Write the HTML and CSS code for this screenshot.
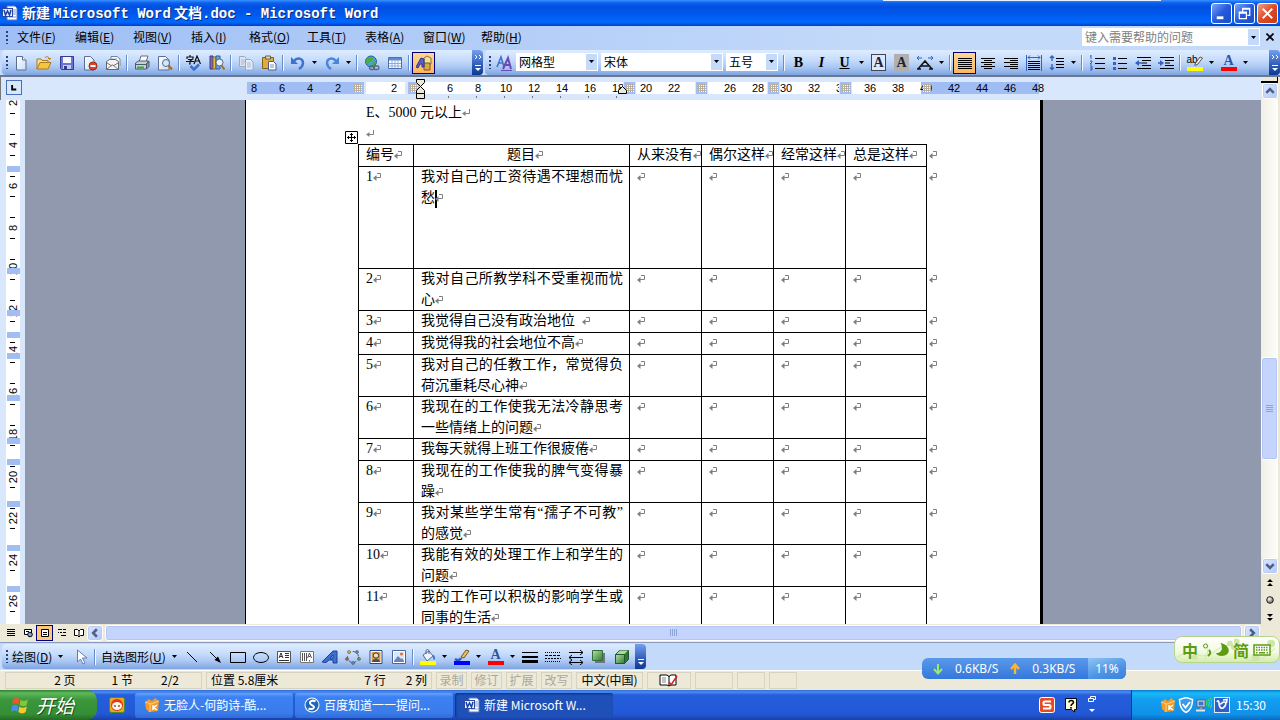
FILE: index.html
```html
<!DOCTYPE html>
<html lang="zh-CN">
<head>
  <meta charset="UTF-8">
  <title>新建 Microsoft Word 文档.doc - Microsoft Word</title>
  <link rel="stylesheet" href="styles.css">
</head>
<body>
  <!-- shared shapes -->
  <svg class="defs" width="0" height="0">
    <defs>
      <linearGradient id="paper" x1="0" y1="0" x2="1" y2="1"><stop offset="0" stop-color="#fff"/><stop offset="1" stop-color="#c9dcf5"/></linearGradient>
      <linearGradient id="green" x1="0" y1="0" x2="1" y2="1"><stop offset="0" stop-color="#b5e0a8"/><stop offset="1" stop-color="#2f7a32"/></linearGradient>
      <radialGradient id="ball" cx=".35" cy=".3" r=".8"><stop offset="0" stop-color="#fff"/><stop offset="1" stop-color="#555"/></radialGradient>
      <pattern id="dots" width="2" height="2" patternUnits="userSpaceOnUse"><rect width="2" height="2" fill="#b9ae9c"/><rect width="1" height="1" fill="#fff"/></pattern>
    </defs>
    <symbol id="down" viewBox="0 0 5 3"><path d="M0 0h5L2.500 3z" fill="#000"/></symbol>
    <symbol id="para" viewBox="0 0 8 8"><path d="M7.500 0v4.500H3" fill="none" stroke="#808080"/><path d="M3.500 2v5L0 4.500z" fill="#808080"/></symbol>
    <symbol id="cell" viewBox="0 0 8 8"><path d="M4 .5h3.500v4H3" fill="none" stroke="#808080"/><path d="M3.500 2v6L0 5z" fill="#808080"/></symbol>
    <symbol id="word" viewBox="0 0 16 16">
      <path d="M5 1h8l2 2v12H5z" fill="#fff" stroke="#5b7cc0"/><path d="M11 5h3M11 7h3M11 9h3M7 12h7" stroke="#7f9bd6"/>
      <rect x=".5" y="3.500" width="10" height="8" fill="#e9f0ff" stroke="#2c4ba0"/><path d="M2 5l1.500 5L5.500 6l2 4L9 5" fill="none" stroke="#1b3fa5" stroke-width="1.500"/>
    </symbol>
    <symbol id="more" viewBox="0 0 8 18"><path d="M1 1l2 2-2 2M5 1l2 2-2 2" fill="none" stroke="#fff"/><path d="M1 11.500h6" stroke="#fff"/><path d="M1 14h6l-3 3z" fill="#fff"/></symbol>
  </svg>

  <header class="titlebar">
    <svg class="ic"><use href="#word"/></svg>
    <h1>新建 <span>Microsoft Word</span> 文档<span>.doc - Microsoft Word</span></h1>
    <button class="win" aria-label="最小化"><svg viewBox="0 0 20 20"><path d="M5 13h7v3H5z" fill="#fff"/></svg></button>
    <button class="win" aria-label="还原"><svg viewBox="0 0 20 20"><path d="M8 8V4.500h7.500V12H13M8 5.500h7.500M4.500 8.500h7.500v7H4.500zM4.500 9.500h7.500" fill="none" stroke="#fff" stroke-width="1.300"/></svg></button>
    <button class="win close" aria-label="关闭"><svg viewBox="0 0 20 20"><path d="M5 5l10 10M15 5L5 15" stroke="#fff" stroke-width="2"/></svg></button>
  </header>

  <nav class="menubar">
    <i class="grip"></i>
    <button>文件(<u>F</u>)</button>
    <button>编辑(<u>E</u>)</button>
    <button>视图(<u>V</u>)</button>
    <button>插入(<u>I</u>)</button>
    <button>格式(<u>O</u>)</button>
    <button>工具(<u>T</u>)</button>
    <button>表格(<u>A</u>)</button>
    <button>窗口(<u>W</u>)</button>
    <button>帮助(<u>H</u>)</button>
    <div class="ask">
      <input type="text" placeholder="键入需要帮助的问题" aria-label="键入需要帮助的问题">
      <button class="drop" aria-label="展开"><svg><use href="#down"/></svg></button>
    </div>
    <button class="shut" aria-label="关闭文档"><svg viewBox="0 0 8 8"><path d="M.5 .5l7 7M7.500 .5l-7 7" stroke="#000" stroke-width="1.600"/></svg></button>
  </nav>

  <div class="toolbars">
    <div class="toolbar standard">
      <i class="grip"></i>
      <button class="tb" aria-label="新建"><svg viewBox="0 0 16 16"><path d="M3.500 1.500h6l3.500 3.500v10H3.500z" fill="url(#paper)" stroke="#5b6f96"/><path d="M9.500 1.500V5H13" fill="#fff" stroke="#5b6f96"/></svg></button>
      <button class="tb" aria-label="打开"><svg viewBox="0 0 16 16"><path d="M1 14V4h4l1 1.500h6V8" fill="#ffe08a" stroke="#a77b1e"/><path d="M1 14L4 7.500h11L12 14z" fill="#f7c544" stroke="#a77b1e"/><path d="M9 2.500c2-1.500 4-.5 4.500 1.500M12 3l1.500 1.500L15 3" fill="none" stroke="#b37a10"/></svg></button>
      <button class="tb" aria-label="保存"><svg viewBox="0 0 16 16"><path d="M1.500 1.500h13v13h-12l-1-1z" fill="#6b74d6" stroke="#343b8e"/><path d="M4 2h8v6H4z" fill="#f4f6ff"/><path d="M4 10h8v4H4z" fill="#c5cbe8"/><path d="M5 11h3v3H5z" fill="#343b8e"/></svg></button>
      <button class="tb" aria-label="权限"><svg viewBox="0 0 16 16"><path d="M2.500 1.500h6L12 5v10H2.500z" fill="url(#paper)" stroke="#5b6f96"/><circle cx="11" cy="11" r="4" fill="#e0432b" stroke="#a4280f"/><path d="M8.500 11h5" stroke="#fff" stroke-width="2"/></svg></button>
      <button class="tb" aria-label="电子邮件"><svg viewBox="0 0 16 16"><path d="M6 7V1.500h6L15 4v7" fill="#fff" stroke="#7282a0"/><path d="M7 4h5M7 6h6" stroke="#9aaac8"/><path d="M1.500 6.500l3-2h6l3 2v8h-12z" fill="#f4f4f4" stroke="#666"/><path d="M1.500 14.500L7 10h1l5.500 4.500M2 8l5 3M13 8l-5 3" fill="none" stroke="#777"/></svg></button>
      <i class="sep"></i>
      <button class="tb" aria-label="打印"><svg viewBox="0 0 16 16"><path d="M5 7l2-6h7l-2 6" fill="#fff" stroke="#5f6d85"/><path d="M1.500 8l3-2h10l-2 3v5h-11z" fill="#c9cfd8" stroke="#4d586b"/><path d="M2 9.500h10" stroke="#4d586b"/><path d="M3 12.500h7" stroke="#2fae3a" stroke-width="2"/><path d="M12.500 9l2.500-2.500v5L12.500 14z" fill="#8e98aa" stroke="#4d586b"/></svg></button>
      <button class="tb" aria-label="打印预览"><svg viewBox="0 0 16 16"><path d="M1.500 1.500h7L12 5v10H1.500z" fill="url(#paper)" stroke="#5b6f96"/><circle cx="9" cy="8" r="3.500" fill="#cfe8ff" stroke="#546a8c"/><path d="M11.500 10.500l3.500 4" stroke="#b5651d" stroke-width="2"/></svg></button>
      <i class="sep"></i>
      <button class="tb" aria-label="拼写和语法"><svg viewBox="0 0 16 16"><path d="M4 0v2M1 4V2h6v2M2 4.500h4L4 6v3H3M0 6.500h8M8 9l3-8 3.500 8M9 6h5" fill="none" stroke="#111" stroke-width="1.200"/><path d="M4.500 11l3.500 3.500 5-5" fill="none" stroke="#3a6fc9" stroke-width="2.500"/></svg></button>
      <button class="tb" aria-label="信息检索"><svg viewBox="0 0 16 16"><path d="M1 1h3v13H1z" fill="#7b66c9" stroke="#443388"/><path d="M4 2h3v12H4z" fill="#e8bb47" stroke="#8d6a1a"/><path d="M7 1h4v13H7z" fill="#6da6d9" stroke="#31608f"/><circle cx="10.500" cy="7.500" r="3.500" fill="#e4f4ff" stroke="#546a8c"/><path d="M12.500 10.500l3 4" stroke="#b5651d" stroke-width="2"/></svg></button>
      <i class="sep"></i>
      <button class="tb" aria-label="复制"><svg viewBox="0 0 16 16"><path d="M1.500 1.500h5l2 2v8h-7z" fill="#dbe4f3" stroke="#9aa8c4"/><path d="M3 5h4M3 7h4M3 9h3" stroke="#aab7d0"/><path d="M7.500 4.500h5l2.500 2.500v8H7.500z" fill="#e6edf8" stroke="#9aa8c4"/><path d="M9 8h4M9 10h4M9 12h4" stroke="#aab7d0"/></svg></button>
      <button class="tb" aria-label="粘贴"><svg viewBox="0 0 16 16"><path d="M1.500 2.500h11v11h-11z" fill="#e0ad3c" stroke="#87611a"/><path d="M4.500 1h5v3h-5z" fill="#ded9c8" stroke="#6b6044"/><path d="M7.500 6.500h5L15 9v6H7.500z" fill="#fff" stroke="#4b5e88"/><path d="M9 10h4M9 12h4" stroke="#7b92c0"/></svg></button>
      <i class="sep"></i>
      <button class="tb" aria-label="撤消"><svg viewBox="0 0 16 16"><path d="M4 6c3-4 9-3 9 2 0 3-1 4-4 6" fill="none" stroke="#3d72d0" stroke-width="2.400"/><path d="M1 2v7h7z" fill="#3d72d0"/></svg></button>
      <button class="arrow" aria-label="撤消列表"><svg><use href="#down"/></svg></button>
      <button class="tb" aria-label="恢复"><svg viewBox="0 0 16 16"><path d="M12 6C9 2 3 3 3 8c0 3 1 4 4 6" fill="none" stroke="#4a85dc" stroke-width="2.400"/><path d="M15 2v7H8z" fill="#4a85dc"/></svg></button>
      <button class="arrow" aria-label="恢复列表"><svg><use href="#down"/></svg></button>
      <i class="sep"></i>
      <button class="tb" aria-label="超链接"><svg viewBox="0 0 16 16"><circle cx="7" cy="6.500" r="5.500" fill="#4f9fd8" stroke="#24618f"/><path d="M3 3c2-2 4 0 6 0 1 2-1 3-3 4s-2 3-3 2-2-4 0-6zM9 7l3-1-1 4-3 1z" fill="#49ad43"/><rect x="5.500" y="11" width="5" height="3.500" rx="1.700" fill="none" stroke="#58677e" stroke-width="1.300"/><rect x="9.500" y="11" width="5.500" height="3.500" rx="1.700" fill="none" stroke="#58677e" stroke-width="1.300"/></svg></button>
      <button class="tb" aria-label="插入表格"><svg viewBox="0 0 16 16"><path d="M1.500 2.500h13v11h-13z" fill="#fff" stroke="#4a6fb5"/><path d="M2 3h12v2.500H2z" fill="#5f8ad6"/><path d="M2 8.500h12M2 11h12M5 5v8M8 5v8M11 5v8" stroke="#92a9d4"/></svg></button>
      <i class="sep"></i>
      <button class="tb on" aria-label="绘图"><svg viewBox="0 0 16 16"><path d="M8 3l3-2 4 2v6l-3 2-4-2z" fill="#f3df9c" stroke="#8b7330"/><path d="M8 8v7h6V8z" fill="#d9a74c" stroke="#7c5b1a"/><path d="M0 12L5 3l3 1v8H6V9H4l-2 4z" fill="#5660c8" stroke="#2d3690"/></svg></button>
      <button class="overflow" aria-label="工具栏选项"><svg><use href="#more"/></svg></button>
    </div>
    <div class="toolbar format">
      <i class="grip"></i>
      <button class="tb" aria-label="格式窗格"><svg viewBox="0 0 16 16"><path d="M1 12L5 2l3 10M2 8h5" fill="none" stroke="#4273cc" stroke-width="1.600"/><path d="M7 14l5-11 3 11M9 10h5" fill="none" stroke="#6b4ab5" stroke-width="2"/><path d="M5 15.500h11" stroke="#6b4ab5"/></svg></button>
      <label class="combo style"><select aria-label="样式"><option>网格型</option></select><i class="drop"><svg><use href="#down"/></svg></i></label>
      <label class="combo font"><select aria-label="字体"><option>宋体</option></select><i class="drop"><svg><use href="#down"/></svg></i></label>
      <label class="combo size"><select aria-label="字号"><option>五号</option></select><i class="drop"><svg><use href="#down"/></svg></i></label>
      <i class="sep"></i>
      <button class="tb letter"><b>B</b></button>
      <button class="tb letter"><b><em>I</em></b></button>
      <button class="tb letter"><b><u>U</u></b></button>
      <button class="arrow" aria-label="下划线样式"><svg><use href="#down"/></svg></button>
      <button class="tb letter"><b class="boxed">A</b></button>
      <button class="tb letter"><b class="shaded">A</b></button>
      <button class="tb" aria-label="字符缩放"><svg viewBox="0 0 16 16"><path d="M1 14L8 6l7 8M4 11h8M0 14h4M12 14h4" fill="none" stroke="#111" stroke-width="1.500"/><path d="M0 3h5M11 3h5M2 1L0 3l2 2M14 1l2 2-2 2" fill="none" stroke="#2f62c4"/></svg></button>
      <button class="arrow" aria-label="缩放列表"><svg><use href="#down"/></svg></button>
      <i class="sep"></i>
      <button class="tb on" aria-label="两端对齐"><svg viewBox="0 0 16 16"><path d="M1 3.500h14M1 5.500h14M1 7.500h14M1 9.500h14M1 11.500h14M1 13.500h14" stroke="#000"/></svg></button>
      <button class="tb" aria-label="居中"><svg viewBox="0 0 16 16"><path d="M1 3.500h14M4 5.500h8M1 7.500h14M4 9.500h8M1 11.500h14M4 13.500h8" stroke="#000"/></svg></button>
      <button class="tb" aria-label="右对齐"><svg viewBox="0 0 16 16"><path d="M1 3.500h14M7 5.500h8M1 7.500h14M7 9.500h8M1 11.500h14M7 13.500h8" stroke="#000"/></svg></button>
      <button class="tb" aria-label="分散对齐"><svg viewBox="0 0 16 16"><path d="M.5 0v16M15.500 0v16M2 2.500h12M4 .5l-2 2 2 2M12 .5l2 2-2 2" fill="none" stroke="#2f62c4"/><path d="M2 6.500h12M2 8.500h12M2 10.500h12M2 12.500h12M2 14.500h12" stroke="#000"/></svg></button>
      <button class="tb" aria-label="行距"><svg viewBox="0 0 16 16"><path d="M3 1v5M1 3l2-2 2 2M3 9v6M1 12.500l2 2 2-2" fill="none" stroke="#2f62c4" stroke-width="1.400"/><path d="M7 3.500h8M7 6.500h8M7 9.500h8M7 12.500h8" stroke="#000"/></svg></button>
      <button class="arrow" aria-label="行距列表"><svg><use href="#down"/></svg></button>
      <i class="sep"></i>
      <button class="tb" aria-label="编号"><svg viewBox="0 0 16 16"><path d="M2 0v4M1 1h1M1 6h2v1L1 9h2M1 11h2v4H1M1 13h2" fill="none" stroke="#2f62c4"/><path d="M6 3.500h10M6 8.500h10M6 13.500h10" stroke="#000"/></svg></button>
      <button class="tb" aria-label="项目符号"><svg viewBox="0 0 16 16"><path d="M1 2h3v3H1zM1 7h3v3H1zM1 12h3v3H1z" fill="#2f62c4"/><path d="M6 3.500h9M6 8.500h9M6 13.500h9" stroke="#000"/></svg></button>
      <button class="tb" aria-label="减少缩进量"><svg viewBox="0 0 16 16"><path d="M2 2.500h14M7 5.500h9M7 8h5M7 10.500h9M2 13.500h14" stroke="#000" stroke-width="1.200"/><path d="M7 8H2" stroke="#2f62c4" stroke-width="1.500"/><path d="M4 5v6L0 8z" fill="#2f62c4"/></svg></button>
      <button class="tb" aria-label="增加缩进量"><svg viewBox="0 0 16 16"><path d="M2 2.500h14M7 5.500h9M7 8h5M7 10.500h9M2 13.500h14" stroke="#000" stroke-width="1.200"/><path d="M0 8h4" stroke="#2f62c4" stroke-width="1.500"/><path d="M2 5v6l4-3z" fill="#2f62c4"/></svg></button>
      <i class="sep"></i>
      <button class="tb ink" aria-label="突出显示"><span class="hl">ab</span><svg viewBox="0 0 16 16"><path d="M8 9l5-7 2.500 1L11 9l-3 1.500z" fill="#f2f2e4" stroke="#555"/><path d="M0 12h16v4H0z" fill="#ff0"/></svg></button>
      <button class="arrow" aria-label="突出显示颜色"><svg><use href="#down"/></svg></button>
      <button class="tb ink" aria-label="字体颜色"><span class="fc">A</span><svg viewBox="0 0 16 16"><path d="M0 12h16v4H0z" fill="#f00"/></svg></button>
      <button class="arrow" aria-label="字体颜色列表"><svg><use href="#down"/></svg></button>
      <button class="overflow" aria-label="工具栏选项"><svg><use href="#more"/></svg></button>
    </div>
  </div>

  <main class="editor">
    <div class="pane">
      <div class="hruler">
        <button class="tabstop" aria-label="左对齐制表符"><svg viewBox="0 0 8 8"><path d="M1.500 0v6H7" fill="none" stroke="#000" stroke-width="2.500"/></svg></button>
        <svg id="hruler" width="798" height="23"></svg>
      </div>
      <div class="view">
        <svg id="vruler" class="vruler" width="25" height="524"></svg>
        <div class="desk">
          <article class="page">
            <p>E、5000 元以上<svg class="ret"><use href="#para"/></svg></p>
            <p><svg class="ret"><use href="#para"/></svg></p>
            <div class="sheet">
              <svg class="handle" viewBox="0 0 13 13"><path d="M.5 .5h12v12H.5z" fill="#fff" stroke="#000"/><path d="M6.500 2v9M2 6.500h9M5 3.500h3M5 9.500h3M3.500 5v3M9.500 5v3" stroke="#000"/></svg>
              <table>
                <colgroup><col class="c-no"><col class="c-item"><col class="c-opt"><col class="c-opt"><col class="c-opt"><col class="c-last"><col class="c-end"></colgroup>
                <thead></thead>
                <tbody></tbody>
              </table>
            </div>
          </article>
        </div>
      </div>
      <div class="hscroll">
        <button class="v" aria-label="普通视图"><svg viewBox="0 0 10 10"><path d="M1 1.500h8M1 3.500h8M1 5.500h8M1 7.500h8" stroke="#000"/></svg></button>
        <button class="v" aria-label="Web 版式视图"><svg viewBox="0 0 10 10"><path d="M1.500 1.500h7v5h-7zM3 3.500h3" fill="#fff" stroke="#000"/><circle cx="7" cy="6.500" r="2.300" fill="#7fa8d8" stroke="#000"/></svg></button>
        <button class="v on" aria-label="页面视图"><svg viewBox="0 0 10 10"><path d="M1.500 1.500h7v7h-7z" fill="#fff" stroke="#000"/><path d="M3 4.500h4M3 6.500h4" stroke="#000"/></svg></button>
        <button class="v" aria-label="大纲视图"><svg viewBox="0 0 10 10"><path d="M1 1.500h4M6 1.500h3M3 4.500h2M6 4.500h3M4 7.500h5M1 4.500h1" stroke="#000"/></svg></button>
        <button class="v" aria-label="阅读版式"><svg viewBox="0 0 10 10"><path d="M.5 1.500h3L5 3l1.500-1.500h3v6h-3L5 9 3.500 7.500h-3zM5 3v6" fill="#fff" stroke="#000"/></svg></button>
        <button class="sb" aria-label="向左"><svg viewBox="0 0 8 8"><path d="M5.500 1L2.500 4l3 3" /></svg></button>
        <div class="thumb"><i></i><i></i><i></i><i></i></div>
        <button class="sb" aria-label="向右"><svg viewBox="0 0 8 8"><path d="M2.500 1l3 3-3 3" /></svg></button>
      </div>
    </div>
    <div class="vscroll">
      <i class="splitter"></i>
      <button class="sb" aria-label="向上"><svg viewBox="0 0 8 8"><path d="M1 5.500l3-3 3 3" /></svg></button>
      <div class="track"><div class="thumb"><i></i><i></i><i></i><i></i></div></div>
      <button class="sb" aria-label="向下"><svg viewBox="0 0 8 8"><path d="M1 2.500l3 3 3-3" /></svg></button>
      <button class="br" aria-label="前一页"><svg viewBox="0 0 8 8"><path d="M4 0l3 3H1zM4 4l3 3H1z"/></svg></button>
      <button class="br" aria-label="选择浏览对象"><svg viewBox="0 0 8 8"><circle cx="4" cy="4" r="3.300" fill="url(#ball)" stroke="#222"/></svg></button>
      <button class="br" aria-label="下一页"><svg viewBox="0 0 8 8"><path d="M1 1h6L4 4zM1 5h6L4 8z"/></svg></button>
    </div>
  </main>

  <div class="drawrow">
    <div class="toolbar draw">
      <i class="grip"></i>
      <button class="txt"><span>绘图(<u>D</u>)</span><svg><use href="#down"/></svg></button>
      <button class="tb" aria-label="选择对象"><svg viewBox="0 0 16 16"><path d="M4.500 1v12l3-3 2.500 5 2-1-2.500-5H14z" fill="#fff" stroke="#5f7cae"/></svg></button>
      <i class="sep"></i>
      <button class="txt auto"><span>自选图形(<u>U</u>)</span><svg><use href="#down"/></svg></button>
      <button class="tb" aria-label="直线"><svg viewBox="0 0 16 16"><path d="M3 3l10 10" stroke="#000"/></svg></button>
      <button class="tb" aria-label="箭头"><svg viewBox="0 0 16 16"><path d="M3 3l8 8" stroke="#000"/><path d="M14 14L7.500 11 11 7.500z"/></svg></button>
      <button class="tb" aria-label="矩形"><svg viewBox="0 0 16 16"><path d="M.5 3.500h15v10H.5z" fill="none" stroke="#000"/></svg></button>
      <button class="tb" aria-label="椭圆"><svg viewBox="0 0 16 16"><ellipse cx="8" cy="8.500" rx="7.500" ry="5" fill="none" stroke="#000"/></svg></button>
      <button class="tb" aria-label="文本框"><svg viewBox="0 0 16 16"><path d="M1.500 2.500h13v11h-13z" fill="#fff" stroke="#555"/><path d="M3 9l2-5 2 5M4 7.500h2M9 4.500h4M9 6.500h4M9 8.500h4M3 11.500h10" fill="none" stroke="#333"/></svg></button>
      <button class="tb" aria-label="竖排文本框"><svg viewBox="0 0 16 16"><path d="M1.500 2.500h13v11h-13z" fill="#fff" stroke="#777"/><path d="M8.500 9l2-5 2 5M9.500 7.500h2M3.500 4v8M5.500 4v8M7.500 4v8M10.500 11v1.500" fill="none" stroke="#555"/></svg></button>
      <button class="tb" aria-label="艺术字"><svg viewBox="0 0 16 16"><path d="M0 13L11 2h4v12h-4v-3H7l-3 2.500zM8 9h3V6z" fill="#3b6fd2" fill-rule="evenodd" stroke="#1c4395"/></svg></button>
      <button class="tb" aria-label="组织结构图"><svg viewBox="0 0 16 16"><circle cx="8" cy="8" r="5.500" fill="none" stroke="#555" stroke-dasharray="3 2"/><circle cx="4" cy="3" r="1.500" fill="#e8b93a" stroke="#555" stroke-width=".6"/><circle cx="12" cy="3" r="1.500" fill="#5a84cf" stroke="#555" stroke-width=".6"/><circle cx="2" cy="10" r="1.500" fill="#c25b3b" stroke="#555" stroke-width=".6"/><circle cx="14" cy="10" r="1.500" fill="#6aa84f" stroke="#555" stroke-width=".6"/><circle cx="8" cy="14" r="1.500" fill="#5a84cf" stroke="#555" stroke-width=".6"/></svg></button>
      <button class="tb" aria-label="剪贴画"><svg viewBox="0 0 16 16"><path d="M2 1.500h12v13H2z" fill="#fff" stroke="#274a91"/><path d="M3.500 3h9v10h-9z" fill="#d69a45"/><circle cx="8" cy="6.500" r="2.700" fill="#f2dbc0" stroke="#333"/><path d="M4 13c0-4 8-4 8 0z" fill="#514b46"/></svg></button>
      <button class="tb" aria-label="图片"><svg viewBox="0 0 16 16"><path d="M1.500 1.500h13v13h-13z" fill="#fff" stroke="#4a66a0"/><path d="M3 3h10v10H3z" fill="#d8e7fb"/><path d="M3 12l4-5 3 3 1-1 2 3v1H3z" fill="#6d83b8"/><circle cx="10.500" cy="5" r="1.500" fill="#e56a2b"/></svg></button>
      <i class="sep"></i>
      <button class="tb" aria-label="填充颜色"><svg viewBox="0 0 16 16"><path d="M3 6l6-4 4 5-6 5z" fill="#eef3fa" stroke="#54698f"/><path d="M6 5V2c0-2 3-2 3 0v3" fill="none" stroke="#54698f"/><path d="M13 6c2 0 2 3 2 4s-2 1-2-1z" fill="#3c75c9"/><path d="M0 12h16v4H0z" fill="#ff0"/></svg></button>
      <button class="arrow" aria-label="填充列表"><svg><use href="#down"/></svg></button>
      <button class="tb" aria-label="线条颜色"><svg viewBox="0 0 16 16"><path d="M1 10c3 2 5 1 6-1" fill="none" stroke="#2c5ec0" stroke-width="2.500"/><path d="M7 8l5-7 3 1-5 7z" fill="#edbf5a" stroke="#7a5a1b"/><path d="M0 12h16v4H0z" fill="#00f"/></svg></button>
      <button class="arrow" aria-label="线条列表"><svg><use href="#down"/></svg></button>
      <button class="tb ink" aria-label="字体颜色"><span class="fc">A</span><svg viewBox="0 0 16 16"><path d="M0 12h16v4H0z" fill="#f00"/></svg></button>
      <button class="arrow" aria-label="字体颜色列表"><svg><use href="#down"/></svg></button>
      <button class="tb" aria-label="线型"><svg viewBox="0 0 16 16"><path d="M0 3.500h16" stroke="#000"/><path d="M0 8h16" stroke="#000" stroke-width="2"/><path d="M0 12.500h16" stroke="#000" stroke-width="3"/></svg></button>
      <button class="tb" aria-label="虚线线型"><svg viewBox="0 0 16 16"><path d="M0 3.500h16M0 12.500h16" stroke="#000" stroke-dasharray="1 1"/><path d="M0 6.500h16" stroke="#000" stroke-dasharray="3 1"/><path d="M0 9.500h16" stroke="#000" stroke-dasharray="2 1"/></svg></button>
      <button class="tb" aria-label="箭头样式"><svg viewBox="0 0 16 16"><path d="M1 3.500h14M12 1l3 2.500L12 6M1 8.500h14M4 6L1 8.500 4 11M1 13.500h14M4 11l-3 2.500L4 16M12 11l3 2.500-3 2.500" fill="none" stroke="#000"/></svg></button>
      <button class="tb" aria-label="阴影样式"><svg viewBox="0 0 16 16"><path d="M4 4h10v10H4z" fill="#6d7683"/><path d="M1.500 1.500h10v10h-10z" fill="url(#green)" stroke="#356d38"/></svg></button>
      <button class="tb" aria-label="三维效果样式"><svg viewBox="0 0 16 16"><path d="M1.500 5.500l4-4h9v9l-4 4h-9z" fill="#2f7a32" stroke="#23582a"/><path d="M2 5.500l4-4h8l-4 4z" fill="#a9dc9d"/><path d="M1.500 5.500h9v9h-9z" fill="url(#green)" stroke="#23582a"/></svg></button>
      <button class="overflow low" aria-label="工具栏选项"><svg viewBox="0 0 8 18"><path d="M1 11.500h6" stroke="#fff"/><path d="M1 14h6l-3 3z" fill="#fff"/></svg></button>
    </div>
  </div>

  <div class="status">
    <div class="cellbox s-page"><span>2 页</span><span>1 节</span><span>2/2</span></div>
    <div class="cellbox s-pos"><span>位置 5.8厘米</span><span class="push">7 行</span><span>2 列</span></div>
    <div class="cellbox off">录制</div>
    <div class="cellbox off">修订</div>
    <div class="cellbox off">扩展</div>
    <div class="cellbox off">改写</div>
    <div class="cellbox s-lang">中文(中国)</div>
    <div class="cellbox s-book"><svg class="book" viewBox="0 0 20 14"><path d="M1 2h7l2 1.500L12 2h5v10h-5l-2 1-2-1H1zM10 3v10" fill="#fff" stroke="#000"/><path d="M3 5h4M3 7h4M3 9h4" stroke="#888"/><path d="M10 9l2 3 6-9" fill="none" stroke="#c22" stroke-width="1.500"/></svg></div>
    <div class="cellbox s-a"></div>
    <div class="cellbox s-b"></div>
    <div class="cellbox s-b"></div>
  </div>

  <footer class="taskbar">
    <button class="start"><svg viewBox="0 0 20 18"><path d="M3 3c2-2 4-2 6 0L8 8C6 6.500 4 6.500 2 8z" fill="#f0552b"/><path d="M10 3.500c2 1.500 4 1.500 7-.5l-1 5.500c-2 1.500-4 1.500-7 0z" fill="#7ec63e"/><path d="M2 9.500c2-1.500 4-1.500 6 0L7 15c-2-2-4-1.500-6 0z" fill="#4a8df0"/><path d="M9 10c2 1.500 4 1.500 7 0l-1 5c-2 2-5 2-7 0z" fill="#fbc72e"/></svg>开始</button>
    <button class="quick" aria-label="快速启动"><svg viewBox="0 0 16 16"><rect x=".5" y=".5" width="15" height="15" rx="2" fill="#e8a81c" stroke="#4d8d27"/><circle cx="8" cy="8" r="6" fill="#e2361d"/><ellipse cx="8" cy="9" rx="5" ry="4" fill="#fff3e4"/><circle cx="6" cy="9" r=".8"/><circle cx="10" cy="9" r=".8"/></svg></button>
    <button class="task"><svg class="ic" viewBox="0 0 16 16"><use href="#kugou"/></svg>无脸人-何韵诗-酷...</button>
    <button class="task"><svg class="ic" viewBox="0 0 16 16"><circle cx="8" cy="8" r="7.500" fill="#fff"/><circle cx="8" cy="8" r="6.500" fill="#1f66b8"/><path d="M11.500 4.500c-3-2-7 0-5 2.500 1 1.500 4 1.500 3.500 3.500-.5 1.500-3 2-5.500 1" fill="none" stroke="#fff" stroke-width="2"/></svg>百度知道一一提问...</button>
    <button class="task active"><svg class="ic"><use href="#word"/></svg>新建 Microsoft W...</button>
    <div class="lang">
      <svg class="ic" viewBox="0 0 16 16"><rect x=".5" y=".5" width="15" height="15" rx="2" fill="#e84a22" stroke="#fff"/><path d="M12 4.500H6c-2 0-2 3.500 0 3.500h4c2 0 2 3.500 0 3.500H4" fill="none" stroke="#fff" stroke-width="2.200"/></svg>
      <svg class="ic" viewBox="0 0 16 16"><path d="M2.500 1.500h11v11h-2v2.500l-3-2.500h-6z" fill="#fffbd8" stroke="#000"/><path d="M6 5.500c0-3 4.500-2.500 4.500 0 0 1.500-2.500 1.500-2.500 3.500M8 10v1.700" fill="none" stroke="#000" stroke-width="1.500"/></svg>
      <svg class="lmore" viewBox="0 0 10 18"><path d="M3.500 3V.5h5v3H6M1.500 2.500h5v3h-5z" fill="none" stroke="#fff"/><path d="M2 13h6l-3 3z" fill="#fff"/></svg>
    </div>
    <div class="tray">
      <svg class="ic" viewBox="0 0 16 16"><g id="kugou"><path d="M1 5l4-3 3 2 3-3 4 3-1 10-9 1-3-3z" fill="#f39a28"/><path d="M1 5l6 2 8-3M6 7v8" fill="none" stroke="#fbd38a"/><path d="M9 8v5M13 8l-3.500 2.500L13 13" fill="none" stroke="#fff" stroke-width="1.500"/></g></svg>
      <svg class="ic" viewBox="0 0 16 16"><path d="M8 .5l6.500 2C14.500 9 13 13 8 15.500 3 13 1.500 9 1.500 2.500z" fill="#3a9be8" stroke="#fff" stroke-width="1.500"/><path d="M4.500 7l3 3.500L12 5" fill="none" stroke="#fff" stroke-width="1.800"/></svg>
      <svg class="ic" viewBox="0 0 16 16"><path d="M1 3h8v7H1zM3 10h4v2H3z" fill="#dce8f5" stroke="#49628a"/><path d="M2.500 4.500h5v4h-5z" fill="#3f74c4"/><path d="M0 13.500h9" stroke="#dfe7f0" stroke-width="2"/><path d="M10 3.500q2 2.500 0 5M12 2.500q3 3.500 0 7M14 1q4 5 0 10" fill="none" stroke="#3be05a" stroke-width="1.200"/></svg>
      <svg class="ic" viewBox="0 0 16 16"><rect x=".5" y=".5" width="15" height="15" fill="#2d5fc8" stroke="#dfeaff"/><path d="M3 5c1-2 2-1 2 1 0 4 2 6 4 5 3-2 4-6 1-6-2 0-2 2-4 2M9 3l4-.5-.5 3.500" fill="none" stroke="#fff" stroke-width="1.600"/></svg>
      <time>15:30</time>
    </div>
  </footer>

  <!-- floating windows -->
  <div class="peek"></div>
  <div class="netspeed">
    <svg viewBox="0 0 12 12"><path d="M6 1v9M2 6l4 4.500L10 6" fill="none" stroke="#9be86a" stroke-width="2"/></svg><span>0.6KB/S</span>
    <svg viewBox="0 0 12 12"><path d="M6 11V2M2 6l4-4.500L10 6" fill="none" stroke="#ffb52e" stroke-width="2.400"/></svg><span>0.3KB/S</span>
    <span class="pct">11%</span>
  </div>
  <div class="ime">
    <svg class="vine" viewBox="0 0 106 27" preserveAspectRatio="none"><path d="M2 22q10-8 20-3t22-6 24 6 34-7M30 26q6-14 2-20M60 2q8 6 4 16" fill="none" stroke="#cfe6a9"/><g fill="#cfe6a9"><circle cx="20" cy="22" r="3"/><circle cx="56" cy="7" r="3"/><circle cx="63" cy="5" r="3"/><circle cx="60" cy="11" r="3"/><circle cx="98" cy="7" r="4"/><circle cx="82" cy="22" r="4"/></g></svg>
    <span>中</span>
    <svg class="mark" viewBox="0 0 10 14"><circle cx="3.500" cy="3" r="2" fill="none" stroke="#5c9c10"/><path d="M7 7q3 3-1 6" fill="none" stroke="#5c9c10" stroke-width="2"/></svg>
    <svg class="moon" viewBox="0 0 14 14"><path d="M5 0c11 2 12 14 1 14-3 0-5-1-6-3 6 0 8-5 5-11z" fill="#5c9c10"/></svg>
    <span>简</span>
    <svg class="keys" viewBox="0 0 18 12"><path d="M1 1h16v10H1z" fill="#fff" stroke="#5c9c10" stroke-width="1.500"/><path d="M3 3.500h12M3 6h12" stroke="#5c9c10" stroke-width="1.500" stroke-dasharray="1.500 1"/><path d="M3 8.700h1.500M6 8.700h6M13.500 8.700H15" stroke="#5c9c10" stroke-width="1.500"/></svg>
  </div>

  <script src="script.js"></script>
</body>
</html>
```

FILE: styles.css
```css
* {
  box-sizing: border-box;
}
body {
  margin: 0;
  height: 100vh;
  display: flex;
  flex-direction: column;
  overflow: hidden;
  background: #c4dafa;
  font-family: "Noto Sans CJK SC", sans-serif;
  font-size: 12px;
  line-height: 16px;
  color: #000;
}
button,
input,
select {
  font: inherit;
  color: inherit;
  margin: 0;
  padding: 0;
  border: 0;
  background: none;
}
svg {
  display: block;
  flex: none;
}
.defs {
  position: absolute;
}
.ic {
  width: 16px;
  height: 16px;
}

/* title bar */
.titlebar {
  flex: none;
  height: 26px;
  display: flex;
  align-items: center;
  gap: 2px;
  padding: 0 2px;
  background: linear-gradient(#3a93ff 0, #0a5fee 3px, #0050e0 7px, #0058ec 14px, #0068ff 22px, #0040c0 26px);
}
.titlebar h1 {
  flex: 1;
  margin: 0 0 0 2px;
  font-size: 14px;
  line-height: 20px;
  color: #fff;
  text-shadow: 1px 1px #0a2a80;
  white-space: nowrap;
}
.titlebar h1 span {
  font-family: "Liberation Mono", monospace;
}
.win {
  width: 21px;
  height: 21px;
  border: 1px solid #fff;
  border-radius: 3px;
  background: linear-gradient(135deg, #7ba5f5, #2659dd 50%, #1c4cc8);
}
.win.close {
  background: linear-gradient(135deg, #f0a08a, #dd4b25 50%, #c43a16);
}

/* menu */
.menubar {
  flex: none;
  height: 24px;
  display: flex;
  align-items: center;
  padding: 0 4px 2px 6px;
  background: linear-gradient(90deg, #9ebef5, #c4dafa 70%);
}
.menubar > button {
  width: 58px;
  text-align: left;
  white-space: nowrap;
}
.menubar > .shut {
  width: 10px;
  margin-left: 6px;
}
.shut svg {
  width: 8px;
  height: 8px;
}
.grip {
  width: 2px;
  height: 13px;
  margin-right: 9px;
  background: repeating-linear-gradient(#27417a 0, #27417a 2px, transparent 2px, transparent 4px);
}
.ask {
  display: flex;
  margin-left: auto;
  width: 178px;
  height: 18px;
  padding: 1px;
  background: #fff;
}
.ask input {
  flex: 1;
  min-width: 0;
  padding-left: 2px;
}
.ask input::placeholder {
  color: #808080;
}
.drop {
  flex: none;
  display: grid;
  place-items: center;
  width: 11px;
  background: #c4dafa;
}
.drop svg,
.arrow svg,
.txt svg {
  width: 5px;
  height: 3px;
}

/* toolbars */
.toolbars {
  flex: none;
  display: flex;
  gap: 2px;
  height: 27px;
  padding-left: 2px;
  background: #c4dafa;
  border-bottom: 2px solid #6c7890;
}
.toolbar {
  display: flex;
  align-items: center;
  height: 25px;
  padding-left: 4px;
  border-radius: 4px;
  background: linear-gradient(#dfecff, #c6dcfb 40%, #a9c6f3 70%, #7ea4e0);
}
.toolbar .grip {
  margin-right: 1px;
}
.standard {
  width: 481px;
}
.format {
  flex: 1;
}
.tb {
  flex: none;
  width: 23px;
  height: 22px;
  display: grid;
  place-items: center;
}
.tb svg {
  width: 16px;
  height: 16px;
}
.on {
  background: linear-gradient(#ffd794, #ffb55e);
  border: 1px solid #000080;
}
.arrow {
  flex: none;
  width: 11px;
  height: 22px;
  display: grid;
  place-items: center;
}
.sep {
  flex: none;
  width: 2px;
  height: 16px;
  margin: 0 2px;
  background: linear-gradient(90deg, #6a8ccb 50%, #f1f9ff 50%);
}
.overflow {
  width: 11px;
  height: 25px;
  margin-left: auto;
  display: grid;
  place-items: center;
  border-radius: 0 4px 4px 0;
  background: linear-gradient(#75a0ec, #2f5bb8 60%, #0a3a94);
}
.overflow svg {
  width: 8px;
  height: 18px;
}
.combo {
  display: flex;
  height: 18px;
  margin: 0 3px 2px 0;
  padding: 1px;
  background: #fff;
}
.combo.style {
  width: 82px;
  margin-left: 1px;
}
.combo.font {
  width: 122px;
}
.combo.size {
  width: 52px;
}
.combo select {
  flex: 1;
  min-width: 0;
  padding-left: 2px;
  appearance: none;
}
.letter {
  font-family: "Liberation Serif", serif;
  font-size: 14px;
}
.boxed,
.shaded {
  width: 15px;
  line-height: 15px;
  background: #dce8fb;
  border: 1px solid #445;
  color: #223;
}
.shaded {
  background: #b0b0b0;
  border-color: #b0b0b0;
}
.ink span,
.ink svg {
  grid-area: 1 / 1;
}
.ink .fc {
  padding-bottom: 4px;
  font: bold 14px "Liberation Serif", serif;
  color: #2b56a8;
}
.ink .hl {
  padding: 0 5px 7px 0;
  font: 10px "Liberation Sans", sans-serif;
}

/* editor */
.editor {
  flex: 1;
  min-height: 0;
  display: flex;
}
.pane {
  flex: 1;
  min-width: 0;
  display: flex;
  flex-direction: column;
}
.hruler {
  flex: none;
  display: flex;
  height: 23px;
  padding-left: 5px;
  background: #d8e7fc;
  border-left: 1px solid #777;
}
.tabstop {
  width: 16px;
  height: 15px;
  margin: 3px 5px 0 0;
  border: 1px solid #4a6fb5;
  display: grid;
  place-items: center;
}
.tabstop svg {
  width: 6px;
  height: 6px;
}
#hruler {
  margin: 0 auto;
  overflow: visible;
}
svg text {
  font: 11px "Liberation Sans", sans-serif;
  text-anchor: middle;
}
.view {
  flex: 1;
  min-height: 0;
  display: flex;
  overflow: hidden;
}
.vruler {
  background: #d8e7fc;
}
.desk {
  flex: 1;
  display: flex;
  padding-left: 2px;
  background: #9099ae;
}
.page {
  width: 798px;
  margin: 0 auto;
  padding: 2px 0 0 120px;
  background: #fff;
  border-left: 1px solid #000;
  border-right: 3px solid #000;
  font-family: "Liberation Serif", "Noto Sans CJK SC", serif;
  font-size: 14px;
  line-height: 21px;
}
.page p {
  margin: 0;
  height: 21px;
}
.ret {
  display: inline-block;
  width: 8px;
  height: 8px;
}
.sheet {
  position: relative;
  margin-left: -8px;
}
.handle {
  position: absolute;
  left: -13px;
  top: -13px;
  width: 13px;
  height: 13px;
}
table {
  table-layout: fixed;
  width: 581px;
  border-collapse: collapse;
}
.c-no { width: 55px; }
.c-item { width: 216px; }
.c-opt { width: 72px; }
.c-last { width: 81px; }
.c-end { width: 13px; }
tr {
  height: 22px;
}
tr.tall {
  height: 102px;
}
th,
td {
  padding: 0 0 0 7px;
  border: 1px solid #000;
  font-weight: normal;
  line-height: 19px;
  text-align: left;
  vertical-align: top;
  white-space: nowrap;
}
th:nth-child(2) {
  text-align: center;
}
td.item {
  padding-right: 6px;
  line-height: 21px;
  white-space: normal;
  text-align: justify;
}
td.item div {
  margin-top: -1px;
}
th.end,
td.end {
  padding-left: 2px;
  border-width: 0 0 0 1px;
}
.caret {
  display: inline-block;
  width: 2px;
  height: 18px;
  margin-right: -2px;
  vertical-align: middle;
  background: #000;
}

/* scroll bars */
.hscroll {
  flex: none;
  display: flex;
  align-items: center;
  height: 18px;
  padding: 0 1px 1px 2px;
  gap: 2px;
  background: #ece9d8;
}
.v {
  width: 17px;
  height: 16px;
  margin-right: -2px;
  display: grid;
  place-items: center;
}
.v svg {
  width: 10px;
  height: 10px;
}
.v.on {
  background: #ffc779;
}
.sb {
  flex: none;
  display: grid;
  place-items: center;
  width: 16px;
  height: 16px;
  border: 1px solid #fff;
  border-radius: 3px;
  background: linear-gradient(135deg, #dbe6ff, #b4c9f8);
  box-shadow: inset 0 0 0 1px #b8ccf4;
}
.sb svg {
  width: 10px;
  height: 10px;
  fill: none;
  stroke: #4d6185;
  stroke-width: 2;
}
.thumb {
  display: flex;
  align-items: center;
  justify-content: center;
  gap: 1px;
  border: 1px solid #fff;
  border-radius: 3px;
  background: #c4d4fc;
  box-shadow: inset 0 0 0 1px #b2c6f5;
}
.hscroll .thumb {
  flex: 1;
  height: 16px;
}
.hscroll .thumb i {
  width: 1px;
  height: 7px;
  background: #8ba5dc;
}
.vscroll {
  flex: none;
  display: flex;
  flex-direction: column;
  align-items: center;
  width: 19px;
  padding-right: 2px;
  background: #ece9d8;
}
.splitter {
  width: 17px;
  height: 6px;
  border-right: 1px solid #000;
  border-bottom: 2px solid #000;
}
.track {
  flex: 1;
  width: 17px;
  padding-top: 258px;
  background: linear-gradient(90deg, #f1efe6, #fdfdfa);
}
.vscroll .thumb {
  height: 103px;
  flex-direction: column;
}
.vscroll .thumb i {
  width: 7px;
  height: 1px;
  background: #8ba5dc;
}
.br {
  height: 17px;
  width: 17px;
  display: grid;
  place-items: center;
}
.br:last-child {
  margin-bottom: 17px;
}
.br svg {
  width: 8px;
  height: 8px;
}

/* drawing bar */
.drawrow {
  flex: none;
  height: 29px;
  padding: 1px 2px 2px;
  border-top: 1px solid #8b9cc0;
  border-bottom: 1px solid #fff;
}
.draw {
  width: 644px;
}
.txt {
  display: flex;
  align-items: center;
  gap: 6px;
  width: 60px;
  padding-left: 3px;
  white-space: nowrap;
}
.txt.auto {
  width: 82px;
}

/* status bar */
.status {
  flex: none;
  display: flex;
  gap: 4px;
  height: 19px;
  padding: 1px 5px;
  background: #ece9d8;
}
.cellbox {
  display: flex;
  justify-content: center;
  width: 31px;
  height: 17px;
  border: 1px solid #d8d3bf;
  line-height: 14px;
  white-space: nowrap;
}
.off {
  color: #aca899;
}
.s-page {
  width: 197px;
  justify-content: flex-end;
  gap: 36px;
  padding-right: 22px;
}
.s-page span:last-child {
  margin-left: -8px;
}
.s-pos {
  width: 226px;
  padding: 0 4px;
  gap: 20px;
}
.push {
  margin-left: auto;
}
.s-lang {
  width: 67px;
}
.s-book {
  width: 44px;
}
.book {
  width: 20px;
  height: 14px;
}
.s-a {
  width: 38px;
}
.s-b {
  width: 28px;
}

/* task bar */
.taskbar {
  flex: none;
  display: flex;
  align-items: center;
  height: 30px;
  color: #fff;
  background: linear-gradient(#3168d5 0, #4a8cf0 2px, #245edb 5px, #2258d6 24px, #1941a5);
}
.start {
  display: flex;
  align-items: center;
  gap: 5px;
  width: 97px;
  height: 30px;
  padding-left: 10px;
  border-radius: 0 10px 10px 0;
  background: linear-gradient(#2f7d2f, #5cb85a 3px, #3c963c 10px, #358f35 24px, #246a24);
  font-size: 19px;
  font-style: italic;
  line-height: 28px;
  text-shadow: 1px 1px #1d4d1d;
}
.start svg {
  width: 21px;
  height: 19px;
}
.quick {
  width: 16px;
  height: 16px;
  margin: 0 10px 0 12px;
}
.task {
  display: flex;
  align-items: center;
  gap: 4px;
  width: 158px;
  height: 25px;
  margin-right: 2px;
  padding-left: 9px;
  border-radius: 3px;
  background: linear-gradient(#6aa2fa, #3c81f3 4px, #3a7bea 20px, #2f6bd6);
  white-space: nowrap;
}
.task.active {
  background: #1e50b7;
  box-shadow: inset 1px 1px 2px #0f3080;
}
.lang {
  display: flex;
  align-items: center;
  gap: 8px;
  margin-left: auto;
  padding-right: 34px;
}
.lmore {
  width: 10px;
  height: 18px;
}
.tray {
  display: flex;
  align-items: center;
  gap: 2px;
  width: 149px;
  height: 30px;
  padding-left: 28px;
  border-left: 1px solid #0b3f9e;
  background: linear-gradient(#0c78cf, #19b9f5 3px, #129df0 10px, #0f92e8 24px, #0a6ac0);
}
.tray time {
  margin-left: 4px;
}

/* floating windows */
.peek {
  position: absolute;
  top: 0;
  right: 119px;
  width: 278px;
  height: 1px;
  background: #e8f2ff;
}
.netspeed {
  position: absolute;
  right: 154px;
  bottom: 41px;
  width: 204px;
  height: 21px;
  display: flex;
  align-items: center;
  gap: 11px;
  padding-left: 10px;
  overflow: hidden;
  border-radius: 6px;
  background: linear-gradient(#5a98ea, #3478dc);
  color: #fff;
  font-family: "Noto Sans", sans-serif;
}
.netspeed svg {
  width: 12px;
  height: 12px;
}
.netspeed .pct {
  margin-left: auto;
  width: 38px;
  line-height: 21px;
  text-align: center;
  background: linear-gradient(160deg, #8fc4f5, #4b94e4 60%, #3a7fdc);
}
.ime {
  position: absolute;
  right: 0;
  bottom: 57px;
  width: 106px;
  height: 27px;
  display: flex;
  align-items: center;
  gap: 4px;
  padding-left: 7px;
  border: 1px solid #b5d68a;
  border-radius: 8px;
  background: linear-gradient(#fff, #f2fae0 60%, #d5ecae);
  color: #5c9c10;
  font-size: 16px;
  font-weight: bold;
}
.ime .vine {
  position: absolute;
  left: 0;
  top: 0;
  width: 100%;
  height: 100%;
}
.ime > :not(.vine) {
  position: relative;
}
.mark {
  width: 10px;
  height: 14px;
}
.moon {
  width: 13px;
  height: 13px;
}
.keys {
  width: 18px;
  height: 12px;
}
```

FILE: script.js
```js
const ret = (id) => `<svg class="ret"><use href="#${id}"/></svg>`;
const cell = ret("cell");
const end = `<td class="end">${cell}</td>`;

const heads = ["编号", "题目", "从来没有", "偶尔这样", "经常这样", "总是这样"];
const items = [
  "我对自己的工资待遇不理想而忧愁<i class=\"caret\"></i>",
  "我对自己所教学科不受重视而忧心",
  "我觉得自己没有政治地位&nbsp; ",
  "我觉得我的社会地位不高",
  "我对自己的任教工作，常觉得负荷沉重耗尽心神",
  "我现在的工作使我无法冷静思考一些情绪上的问题",
  "我每天就得上班工作很疲倦",
  "我现在的工作使我的脾气变得暴躁",
  "我对某些学生常有“孺子不可教”的感觉",
  "我能有效的处理工作上和学生的问题",
  "我的工作可以积极的影响学生或同事的生活"
];

document.querySelector("thead").innerHTML =
  "<tr>" + heads.map(h => `<th>${h}${cell}</th>`).join("") + end + "</tr>";

document.querySelector("tbody").innerHTML = items.map((text, i) =>
  `<tr class="${i === 0 ? "tall" : ""}"><td>${i + 1}${cell}</td><td class="item"><div>${text}${cell}</div></td>` +
  `<td>${cell}</td>`.repeat(4) + end + "</tr>"
).join("");

// horizontal ruler, 14px per character
const rect = (x, y, w, h, fill) => `<rect x="${x}" y="${y}" width="${w}" height="${h}" fill="${fill}"/>`;
let h = rect(2, 5, 117, 12, "#a0bdf4") + rect(121, 5, 39, 12, "#fff") + rect(175, 5, 501, 12, "#fff") + rect(676, 5, 118, 12, "#a0bdf4");
for (let n = -8; n <= 48; n += 2) {
  if (n === 0 || n === 4 || n === 24) continue;
  h += `<text x="${121 + n * 14}" y="15">${Math.abs(n)}</text>`;
}
for (let x = 203; x <= 371; x += 28) h += rect(x, 19, 1, 2, "#777");
[163, 379, 451, 523, 595].forEach(x => {
  h += rect(x - 1, 5, 13, 12, "#d8e7fc") + rect(x, 5, 11, 12, "#a0bdf4") + rect(x + 2, 7, 8, 8, "url(#dots)");
});
h += rect(109, 7, 8, 8, "url(#dots)") + rect(678, 7, 8, 8, "url(#dots)");
h += '<path d="M171.500 2.500h8v3l-4 4-4-4zM171.500 16.500v-3l4-4 4 4v3zM171.500 16.500h8v5h-8z" fill="#ece9d8" stroke="#000"/>';
h += '<path d="M373.500 16.500v-3l4-4 4 4v3z" fill="#ece9d8" stroke="#000"/>';
document.getElementById("hruler").innerHTML = h;

// vertical ruler
let v = rect(6, 0, 14, 524, "#fff");
for (let k = 0; k < 13; k++) {
  const y = Math.round(3 + k * 41.5);
  v += `<text transform="translate(17 ${y}) rotate(-90)">${2 + k * 2}</text>`;
  v += rect(10, y + 10, 5, 1, "#000") + rect(10, y + 31, 5, 1, "#000");
}
[66, 168, 210, 232, 253, 295, 338, 359, 401, 445, 486].forEach(y => {
  v += rect(7, y, 13, 6, "#a0bdf4");
});
document.getElementById("vruler").innerHTML = v;
```
